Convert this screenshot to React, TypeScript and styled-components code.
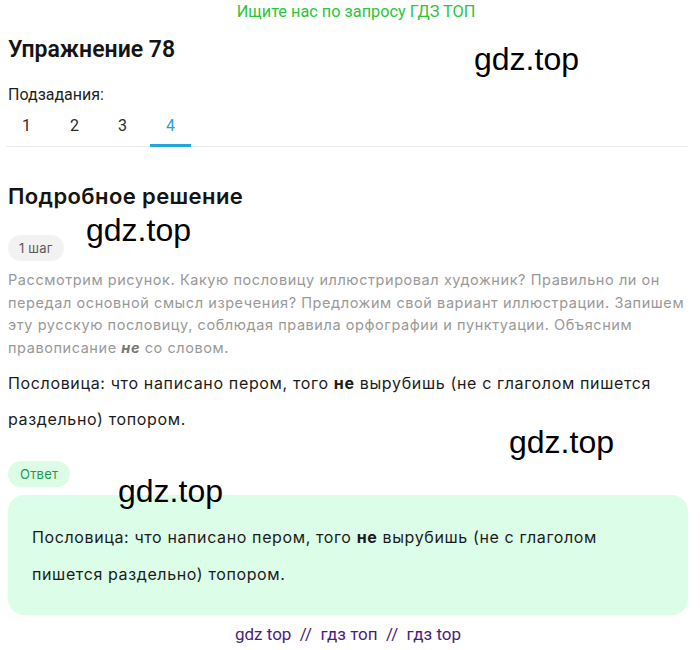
import styled, { createGlobalStyle } from 'styled-components';

const GlobalStyle = createGlobalStyle`
    body {
        margin: 0;
        background: #ffffff;
        font-family: Roboto, 'Liberation Sans', sans-serif;
        color: #1b1b1b;
    }
`;

const tabs = ['1', '2', '3', '4'];
const activeTab = '4';

const marks = [
    { left: 474, top: 40 },
    { left: 86, top: 211 },
    { left: 509, top: 423 },
    { left: 118, top: 472 },
];

const App = () => {
    return (
        <Page>
            <GlobalStyle />
            <Banner>Ищите нас по запросу ГДЗ ТОП</Banner>
            <Content>
                <Title>Упражнение 78</Title>
                <SubLabel>Подзадания:</SubLabel>
                <TabRow>
                    {tabs.map((t) => (
                        <Tab key={t} $active={t === activeTab}>
                            {t}
                        </Tab>
                    ))}
                </TabRow>
                <SectionTitle>Подробное решение</SectionTitle>
                <Pill>1 шаг</Pill>
                <Task>
                    Рассмотрим рисунок. Какую пословицу иллюстрировал художник? Правильно ли он
                    <br />
                    передал основной смысл изречения? Предложим свой вариант иллюстрации. Запишем
                    <br />
                    эту русскую пословицу, соблюдая правила орфографии и пунктуации. Объясним
                    <br />
                    правописание <em>не</em> со словом.
                </Task>
                <Solution>
                    Пословица: что написано пером, того <b>не</b> вырубишь (не с глаголом пишется
                    <br />
                    раздельно) топором.
                </Solution>
                <Pill $green>Ответ</Pill>
                <AnswerBox>
                    Пословица: что написано пером, того <b>не</b> вырубишь (не с глаголом
                    <br />
                    пишется раздельно) топором.
                </AnswerBox>
                <Footer>gdz top &nbsp;//&nbsp; гдз топ &nbsp;//&nbsp; гдз top</Footer>
            </Content>
            {marks.map((m, i) => (
                <Watermark key={i} style={{ left: m.left, top: m.top }}>
                    gdz.top
                </Watermark>
            ))}
        </Page>
    );
};

const Page = styled.div`
    position: relative;
    width: 700px;
    min-height: 650px;
`;

const Banner = styled.div`
    height: 24px;
    line-height: 24px;
    text-align: center;
    font-size: 16.3px;
    color: #2cc53c;
    padding-left: 12px;
`;

const Content = styled.div`
    padding: 0 12px 0 8px;
    display: flex;
    flex-direction: column;
    align-items: flex-start;
`;

const Title = styled.h1`
    margin: 12px 0 0;
    font-size: 23px;
    line-height: 28px;
    font-weight: 600;
    color: #141414;
`;

const SubLabel = styled.div`
    margin-top: 21px;
    font-size: 16px;
    line-height: 20px;
    color: #1f1f1f;
`;

const TabRow = styled.div`
    align-self: stretch;
    display: flex;
    gap: 7px;
    margin-top: 11px;
    margin-left: -2px;
    border-bottom: 1px solid #e8e8e8;
`;

const Tab = styled.div<{ $active?: boolean }>`
    width: 41px;
    text-align: center;
    font-size: 16px;
    line-height: 20px;
    padding-bottom: 8px;
    margin-bottom: -1px;
    color: ${(p) => (p.$active ? '#2f9ed4' : '#2a2a2a')};
    border-bottom: 3px solid ${(p) => (p.$active ? '#22a6dc' : 'transparent')};
`;

const SectionTitle = styled.h2`
    margin: 35px 0 0;
    font-family: Inter, 'Noto Sans', sans-serif;
    font-size: 22px;
    letter-spacing: 0.4px;
    line-height: 28px;
    font-weight: 600;
    color: #141414;
`;

const Pill = styled.div<{ $green?: boolean }>`
    margin-top: ${(p) => (p.$green ? '24px' : '25px')};
    height: 26px;
    line-height: 26px;
    padding: 0 ${(p) => (p.$green ? '12px' : '11px')};
    border-radius: 13px;
    font-family: Inter, 'Noto Sans', sans-serif;
    font-size: 13px;
    letter-spacing: 0.2px;
    background: ${(p) => (p.$green ? '#dcfce6' : '#f2f2f3')};
    color: ${(p) => (p.$green ? '#219a4c' : '#5a5a5a')};
`;

const Task = styled.p`
    margin: 8px 0 0;
    font-family: Inter, 'Noto Sans', sans-serif;
    font-size: 14.5px;
    letter-spacing: 0.57px;
    line-height: 22.5px;
    color: #999999;
    white-space: nowrap;

    em {
        font-weight: 700;
        color: #777;
    }
`;

const Solution = styled.p`
    margin: 6px 0 0;
    font-family: Inter, 'Noto Sans', sans-serif;
    font-size: 16px;
    letter-spacing: 0.65px;
    line-height: 36px;
    color: #1b1b1b;
    white-space: nowrap;
`;

const AnswerBox = styled.div`
    align-self: stretch;
    margin-top: 8px;
    padding: 24px 24px 23px;
    border-radius: 16px;
    background: #dcfde7;
    font-family: Inter, 'Noto Sans', sans-serif;
    font-size: 16px;
    letter-spacing: 0.62px;
    line-height: 36.5px;
    color: #1b1b1b;
    white-space: nowrap;
`;

const Footer = styled.div`
    align-self: stretch;
    margin-top: 9px;
    text-align: center;
    font-size: 17px;
    line-height: 20px;
    color: #4a1d80;
`;

const Watermark = styled.div`
    position: absolute;
    font-family: 'Liberation Sans', Arial, sans-serif;
    font-size: 32px;
    line-height: 38px;
    color: #000;
    pointer-events: none;
`;

export default App;
